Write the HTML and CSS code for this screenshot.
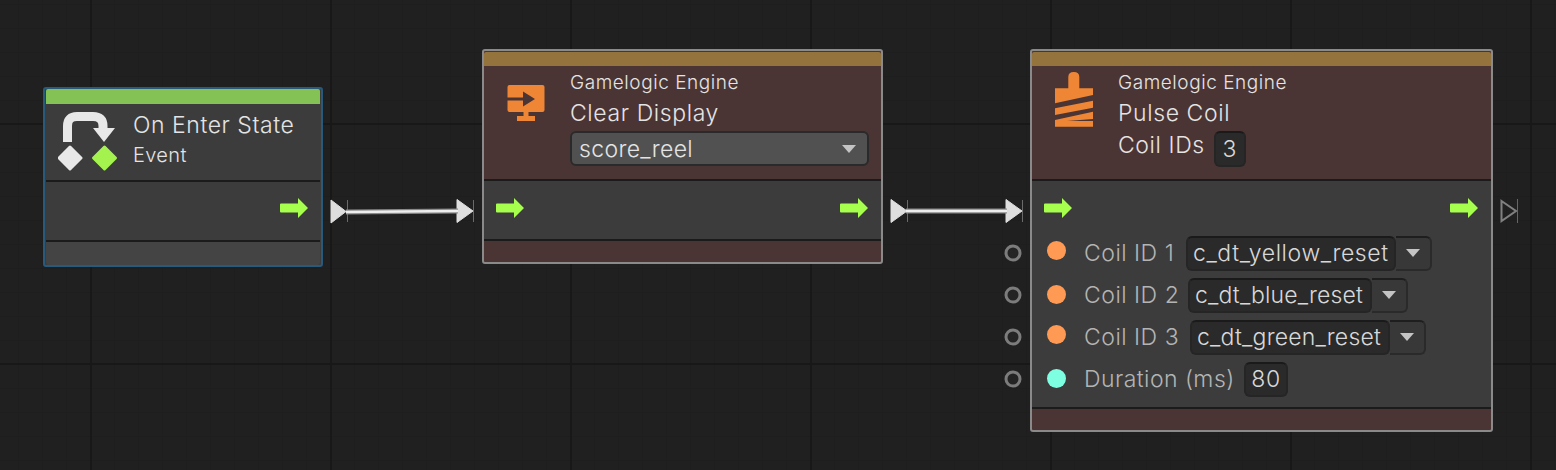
FILE: index.html
```html
<!DOCTYPE html>
<html>
<head>
<meta charset="utf-8">
<title>State graph</title>
<link rel="stylesheet" href="styles.css">
</head>
<body>
<svg class="edges" width="1556" height="470">
  <g fill="#dedede" stroke="#dedede" stroke-width="1" stroke-linejoin="round">
    <path d="M331 200 L346 211.500 L331 223 Z"/>
    <path d="M457 199.500 L473 211 L457 222.500 Z"/>
    <path d="M891 199.500 L907 211 L891 222.500 Z"/>
    <path d="M1006 199.500 L1022 211 L1006 222.500 Z"/>
  </g>
  <g stroke="#6a6a6a" stroke-width="1">
    <path d="M347.500 200 V222"/><path d="M473.500 200 V222"/>
    <path d="M907.500 200 V222"/><path d="M1022.500 200 V222"/>
  </g>
  <path d="M346 212 L458 211" stroke="#8a8a8a" stroke-width="5"/>
  <path d="M346 212 L458 211" stroke="#eee" stroke-width="2.500"/>
  <path d="M906 211 H1007" stroke="#8a8a8a" stroke-width="5"/>
  <path d="M906 211 H1007" stroke="#eee" stroke-width="2.500"/>
  <path d="M1501.500 201 L1516 211 L1501.500 221 Z" fill="none" stroke="#808080" stroke-width="2"/>
  <path d="M1517.500 199 V223" stroke="#666" stroke-width="1"/>
  <g fill="#242424" stroke="#7c7c7c" stroke-width="3">
    <circle cx="1013" cy="253" r="7"/>
    <circle cx="1013" cy="295" r="7"/>
    <circle cx="1013" cy="337" r="7"/>
    <circle cx="1013" cy="379" r="7"/>
  </g>
</svg>

<div class="node node-event">
  <div class="bar bar-green"></div>
  <div class="head head-event">
    <svg class="icon-event" width="62" height="66" viewBox="0 0 62 66">
      <path d="M9.500 33 V17 Q9.500 7.500 19 7.500 H35 Q45 7.500 45 17 V21" fill="none" stroke="#e8e8e8" stroke-width="9"/>
      <path d="M35 19 H57 L46 33 Z" fill="#e8e8e8"/>
      <path d="M12 38 L23 49 L12 60 L1 49 Z" fill="#e8e8e8" stroke="#e8e8e8" stroke-width="3" stroke-linejoin="round"/>
      <path d="M46.500 38 L57.500 49 L46.500 60 L35.500 49 Z" fill="#a3f24e" stroke="#a3f24e" stroke-width="3" stroke-linejoin="round"/>
    </svg>
    <div class="titles-event">
      <div class="title-lg">On Enter State</div>
      <div class="sub">Event</div>
    </div>
  </div>
  <div class="flow flow-event">
    <svg class="arrow" width="28" height="20" viewBox="0 0 28 20"><path d="M1 5.500 H18 V0 L28 10 L18 20 V14.500 H1 Q0 14.500 0 13.500 V6.500 Q0 5.500 1 5.500 Z"/></svg>
  </div>
  <div class="foot foot-grey"></div>
</div>

<div class="node node-clear">
  <div class="bar bar-brown"></div>
  <div class="head">
    <svg class="icon-display" width="38" height="36" viewBox="0 0 38 36">
      <rect x="0.500" y="0" width="37" height="27" rx="2" fill="#ee8636"/>
      <path d="M0 12.500 H16 V6.500 L28 14 L16 21.500 V15.500 H0 Z" fill="#4b3434"/>
      <path d="M16.500 27 H21.500 V31 H28 V36 H10 V31 H16.500 Z" fill="#ee8636"/>
    </svg>
    <div class="titles">
      <div class="vendor">Gamelogic Engine</div>
      <div class="title">Clear Display</div>
      <div class="select">
        <span>score_reel</span>
        <i class="tri"></i>
      </div>
    </div>
  </div>
  <div class="flow flow-short">
    <svg class="arrow" width="28" height="20" viewBox="0 0 28 20"><path d="M1 5.500 H18 V0 L28 10 L18 20 V14.500 H1 Q0 14.500 0 13.500 V6.500 Q0 5.500 1 5.500 Z"/></svg>
    <svg class="arrow" width="28" height="20" viewBox="0 0 28 20"><path d="M1 5.500 H18 V0 L28 10 L18 20 V14.500 H1 Q0 14.500 0 13.500 V6.500 Q0 5.500 1 5.500 Z"/></svg>
  </div>
  <div class="foot"></div>
</div>

<div class="node node-pulse">
  <div class="bar bar-brown"></div>
  <div class="head">
    <svg class="icon-coil" width="38" height="55" viewBox="0 0 38 55">
      <path d="M13.300 16.300 V5 Q13.300 0 18.800 0 Q24.300 0 24.300 5 V16.300 H38 V23 L0 31.300 V16.300 Z" fill="#ee8636"/>
      <path d="M0 36.300 L38 28.700 V35.700 L0 43 Z" fill="#ee8636"/>
      <path d="M0 48 L38 39.700 V47 L12 49 H38 V54.700 H0 Z" fill="#ee8636"/>
    </svg>
    <div class="titles">
      <div class="vendor">Gamelogic Engine</div>
      <div class="title">Pulse Coil</div>
      <div class="title-row">
        <span class="title">Coil IDs</span>
        <span class="num num-count">3</span>
      </div>
    </div>
  </div>
  <div class="body">
    <div class="flow-row">
      <svg class="arrow" width="28" height="20" viewBox="0 0 28 20"><path d="M1 5.500 H18 V0 L28 10 L18 20 V14.500 H1 Q0 14.500 0 13.500 V6.500 Q0 5.500 1 5.500 Z"/></svg>
      <svg class="arrow" width="28" height="20" viewBox="0 0 28 20"><path d="M1 5.500 H18 V0 L28 10 L18 20 V14.500 H1 Q0 14.500 0 13.500 V6.500 Q0 5.500 1 5.500 Z"/></svg>
    </div>
    <div class="row row-yellow">
      <i class="dot dot-orange dot-up"></i><span class="label">Coil ID 1</span>
      <span class="field">c_dt_yellow_reset</span><span class="drop"><i class="tri"></i></span>
    </div>
    <div class="row row-blue">
      <i class="dot dot-orange"></i><span class="label">Coil ID 2</span>
      <span class="field">c_dt_blue_reset</span><span class="drop"><i class="tri"></i></span>
    </div>
    <div class="row row-green">
      <i class="dot dot-orange dot-up"></i><span class="label">Coil ID 3</span>
      <span class="field">c_dt_green_reset</span><span class="drop"><i class="tri"></i></span>
    </div>
    <div class="row row-duration">
      <i class="dot dot-teal"></i><span class="label">Duration (ms)</span>
      <span class="num num-field">80</span>
    </div>
  </div>
  <div class="foot"></div>
</div>
</body>
</html>
```

FILE: styles.css
```css
html, body { margin: 0; padding: 0; height: 470px; overflow: hidden; }

body {
  position: relative;
  font-family: Inter, "Noto Sans", sans-serif;
  font-weight: 300;
  letter-spacing: 0.55px;
  color: #e4e4e4;
  background-color: #202020;
  background-image:
    linear-gradient(to right, #181818 2px, transparent 2px),
    linear-gradient(to bottom, #181818 2px, transparent 2px),
    linear-gradient(to right, #1e1e1e 1px, transparent 1px),
    linear-gradient(to bottom, #1e1e1e 1px, transparent 1px);
  background-size: 240px 240px, 240px 240px, 24px 24px, 24px 24px;
  background-position: 90px 0, 0 123px, 18px 0, 0 4px;
}

.edges { position: absolute; left: 0; top: 0; }

/* nodes sit on the free canvas */
.node {
  position: absolute;
  box-sizing: border-box;
  display: flex;
  flex-direction: column;
  border: 2px solid #8a8a8a;
  border-radius: 3px;
  background: #4b3434;
}
.node-event { left: 43px; top: 87px; width: 280px; height: 180px; border-color: #285a7c; background: #3c3c3c; padding: 0 1px; }
.node-clear { left: 482px; top: 49px; width: 401px; height: 215px; padding-top: 1px; }
.node-pulse { left: 1030px; top: 49px; width: 463px; height: 383px; padding-top: 1px; }

.bar { height: 14px; flex: none; border-radius: 2px 2px 0 0; }
.bar-green { height: 15px; background: #85c255; }
.bar-brown { background: #95733c; }

.head { position: relative; height: 113px; flex: none; display: flex; }
.head-event { height: 76px; background: #3c3c3c; }

.icon-event { position: absolute; left: 12px; top: 5px; }
.icon-display { position: absolute; left: 23px; top: 19px; }
.icon-coil { position: absolute; left: 23px; top: 6px; }

.titles { margin-left: 86px; padding-top: 6px; flex: 1; }
.titles-event { margin-left: 87px; padding-top: 6px; }

.title-lg { font-size: 23px; line-height: 30px; }
.sub { font-size: 20px; line-height: 30px; letter-spacing: 0.35px; }
.vendor { font-size: 19px; line-height: 22px; margin-bottom: 3px; }
.title { font-size: 23px; line-height: 32px; letter-spacing: 0.6px; }
.title-row { display: flex; align-items: flex-start; gap: 9px; }

.select {
  box-sizing: border-box;
  display: flex;
  align-items: center;
  justify-content: space-between;
  width: 299px;
  height: 35px;
  margin-top: 2px;
  padding: 0 11px 0 7px;
  font-size: 23px;
  letter-spacing: 0.35px;
  background: #515151;
  border: 2px solid #2a2a2a;
  border-radius: 6px;
}

.tri {
  display: block;
  width: 0;
  height: 0;
  border-left: 7.5px solid transparent;
  border-right: 7.5px solid transparent;
  border-top: 8px solid #c4c4c4;
}

.flow, .flow-row { display: flex; justify-content: flex-end; }
.flow {
  flex: none;
  box-sizing: border-box;
  height: 62px;
  padding: 17px 13px 0 12px;
  background: #3c3c3c;
  border-top: 2px solid #1b1b1b;
  border-bottom: 2px solid #1b1b1b;
}
.flow-event { padding: 16px 12px 0; }
.flow-short { justify-content: space-between; }

.arrow { display: block; fill: #a6ff4d; }

.body {
  flex: none;
  box-sizing: border-box;
  height: 230px;
  background: #3c3c3c;
  border-top: 2px solid #1b1b1b;
  border-bottom: 2px solid #1b1b1b;
}
.flow-row { justify-content: space-between; height: 20px; padding: 17px 13px 14px 12px; }

.row { display: flex; align-items: center; height: 42px; padding-left: 15px; }

.dot { flex: none; width: 19px; height: 19px; border-radius: 50%; margin: 0 18px 2px 0; }
.dot-up { margin-bottom: 6px; }
.dot-orange { background: #ff9a55; }
.dot-teal { background: #7fffe2; }

.label { flex: none; color: #b4b4b4; font-size: 23px; letter-spacing: 0.5px; white-space: nowrap; }

.field, .num {
  box-sizing: border-box;
  display: flex;
  align-items: center;
  flex: none;
  height: 35px;
  padding: 0 5px;
  font-size: 23px;
  white-space: nowrap;
  color: #d8d8d8;
  background: #2a2a2a;
  border: 2px solid #252525;
  border-top-color: #1a1a1a;
  border-radius: 6px;
}
.drop {
  box-sizing: border-box;
  display: flex;
  align-items: center;
  justify-content: center;
  flex: none;
  width: 36px;
  height: 35px;
  background: #383838;
  border: 2px solid #2a2a2a;
  border-left: none;
  border-top-color: #1e1e1e;
  border-radius: 0 6px 6px 0;
}
.num { justify-content: center; padding: 0; }
.num-count { height: 36px; width: 32px; margin-top: 2px; }
.num-field { width: 44px; }

.row-yellow .label { width: 102px; }
.row-yellow .field { width: 210px; letter-spacing: 0.6px; }
.row-blue .label { width: 104px; }
.row-blue .field { width: 184px; letter-spacing: 0.15px; }
.row-green .label { width: 106px; }
.row-green .field { width: 200px; letter-spacing: 0.2px; }
.row-duration .label { width: 160px; letter-spacing: 0.45px; }

.foot { flex: 1; }
.foot-grey { background: #444; border-radius: 0 0 3px 3px; }
```
